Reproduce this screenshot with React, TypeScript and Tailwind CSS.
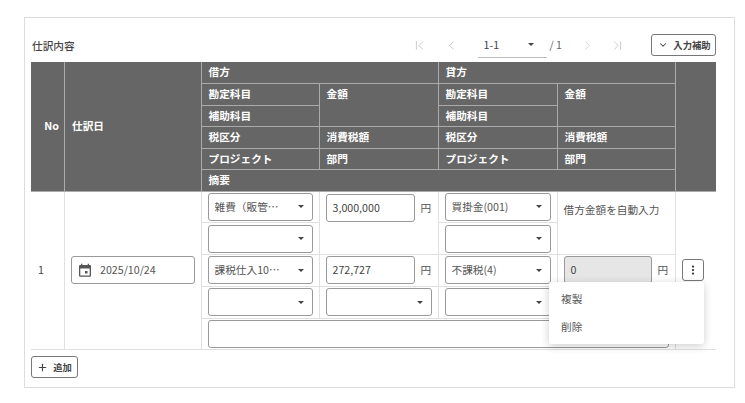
import { ChevronDown, ChevronFirst, ChevronLast, ChevronLeft, ChevronRight, EllipsisVertical, Plus } from 'lucide-react';

const FONT = "font-['Noto_Sans_CJK_JP','Noto_Sans',sans-serif]";

function Caret() {
  return <span className="h-0 w-0 border-x-[3px] border-t-[3px] border-x-transparent border-t-[#444]" />;
}

function Select({ value = '', className = '' }: { value?: string; className?: string }) {
  return (
    <div className={`flex h-[28px] items-center justify-between rounded-[3px] border border-[#999] bg-white pl-[6px] pr-[8px] text-[10.67px] text-[#555] ${className}`}>
      <span className="truncate">{value}</span>
      <Caret />
    </div>
  );
}

function Amount({ value, disabled }: { value: string; disabled?: boolean }) {
  return (
    <div className="flex items-center">
      <div className={`flex h-[28px] flex-1 items-center rounded-[3px] border border-[#999] pl-[6px] text-[10.67px] text-[#444] ${disabled ? 'bg-[#e6e6e6]' : 'bg-white'}`}>
        {value}
      </div>
      <span className="w-[17px] shrink-0 pl-[6px] text-[10.67px] text-[#555]">円</span>
    </div>
  );
}

const th = 'border border-[#aaa] px-[7px] text-left align-top text-[10.67px] font-bold leading-[20px] text-white';
const td = 'border border-[#e0e0e0] px-[6px] py-0 align-middle';

export default function App() {
  return (
    <div className={`h-[403px] w-[745px] overflow-hidden bg-white pl-[24px] pt-[17px] ${FONT}`}>
      <div className="relative h-[371px] w-[711px] border border-[#ddd] px-[6px]">
        {/* Toolbar */}
        <div className="flex h-[44px] w-[685px] items-end justify-between">
          <span className="pb-[8px] pl-[1px] text-[10.67px] font-medium text-[#444]">仕訳内容</span>
          <div className="flex items-center pb-[4px]">
            <ChevronFirst className="h-[15px] w-[15px] text-[#bbb]" strokeWidth={1.25} />
            <ChevronLeft className="ml-[17px] h-[15px] w-[15px] text-[#bbb]" strokeWidth={1.25} />
            <div className="ml-[19px] flex h-[26px] w-[69px] items-center justify-between border-b border-[#bbb] pl-[6px] pr-[13px] text-[10.67px] text-[#444]">
              <span>1-1</span>
              <Caret />
            </div>
            <span className="ml-[3px] text-[10.67px] text-[#666]">/ 1</span>
            <ChevronRight className="ml-[18px] h-[15px] w-[15px] text-[#ccc]" strokeWidth={1.25} />
            <ChevronLast className="ml-[15px] h-[15px] w-[15px] text-[#bbb]" strokeWidth={1.25} />
            <button className="ml-[26px] flex h-[22px] w-[65px] items-center justify-center gap-[5px] rounded-[3px] border border-[#777] bg-white pl-[2px] text-[9.33px] font-bold text-[#444]">
              <ChevronDown className="h-[10px] w-[10px]" strokeWidth={2.5} />
              入力補助
            </button>
          </div>
        </div>

        {/* Journal table */}
        <table className="w-[685px] table-fixed border-collapse">
          <colgroup>
            <col className="w-[33.5px]" />
            <col className="w-[136.5px]" />
            <col className="w-[118px]" />
            <col className="w-[119px]" />
            <col className="w-[119px]" />
            <col className="w-[118px]" />
            <col className="w-[41px]" />
          </colgroup>
          <thead className="bg-[#666]">
            <tr className="h-[21.5px]">
              <th rowSpan={6} className={`${th} !border-l-0 !border-t-0 !pr-[5px] !text-right !align-middle`}>No</th>
              <th rowSpan={6} className={`${th} !border-t-0 !align-middle`}>仕訳日</th>
              <th colSpan={2} className={`${th} !border-t-0`}>借方</th>
              <th colSpan={2} className={`${th} !border-t-0`}>貸方</th>
              <th rowSpan={6} className={`${th} !border-r-0 !border-t-0`} />
            </tr>
            <tr className="h-[21.5px]">
              <th className={th}>勘定科目</th>
              <th rowSpan={2} className={th}>金額</th>
              <th className={th}>勘定科目</th>
              <th rowSpan={2} className={th}>金額</th>
            </tr>
            <tr className="h-[21.5px]">
              <th className={th}>補助科目</th>
              <th className={th}>補助科目</th>
            </tr>
            <tr className="h-[21.5px]">
              <th className={th}>税区分</th>
              <th className={th}>消費税額</th>
              <th className={th}>税区分</th>
              <th className={th}>消費税額</th>
            </tr>
            <tr className="h-[21.5px]">
              <th className={th}>プロジェクト</th>
              <th className={th}>部門</th>
              <th className={th}>プロジェクト</th>
              <th className={th}>部門</th>
            </tr>
            <tr className="h-[21.5px]">
              <th colSpan={4} className={th}>摘要</th>
            </tr>
          </thead>
          <tbody>
            <tr className="h-[31.75px]">
              <td rowSpan={5} className={`${td} !border-l-0 pl-[7px] text-[10.67px] text-[#444]`}>1</td>
              <td rowSpan={5} className={td}>
                <div className="flex h-[28px] items-center gap-[8px] rounded-[3px] border border-[#999] pl-[6px] text-[10.67px] text-[#555]">
                  <svg viewBox="0 0 14 14" className="h-[14px] w-[14px]" fill="#555">
                    <path d="M3 0.8h1.3v1.2h5.4V0.8H11v1.2h.8A1.2 1.2 0 0 1 13 3.2v9.3a1.2 1.2 0 0 1-1.2 1.2H2.2A1.2 1.2 0 0 1 1 12.500V3.200A1.200 1.200 0 0 1 2.200 2H3zM2.300 5.500v6.900h9.400V5.500z" fillRule="evenodd" />
                    <rect x="7" y="8" width="2.500" height="2.500" />
                  </svg>
                  2025/10/24
                </div>
              </td>
              <td className={td}><Select value="雑費（販管…" /></td>
              <td rowSpan={2} className={`${td} !align-top pt-[2px]`}><Amount value="3,000,000" /></td>
              <td className={td}><Select value="買掛金(001)" /></td>
              <td rowSpan={2} className={`${td} !align-top pt-[10px] text-[10.67px] text-[#555]`}>借方金額を自動入力</td>
              <td rowSpan={5} className={`${td} !border-r-0`}>
                <button className="flex h-[22px] w-[22px] items-center justify-center rounded-[3px] border border-[#777] bg-white">
                  <EllipsisVertical className="h-[12px] w-[12px] text-[#333]" strokeWidth={2.5} />
                </button>
              </td>
            </tr>
            <tr className="h-[31.75px]">
              <td className={td}><Select /></td>
              <td className={td}><Select /></td>
            </tr>
            <tr className="h-[31.75px]">
              <td className={td}><Select value="課税仕入10…" /></td>
              <td className={td}><Amount value="272,727" /></td>
              <td className={td}><Select value="不課税(4)" /></td>
              <td className={td}><Amount value="0" disabled /></td>
            </tr>
            <tr className="h-[31.75px]">
              <td className={td}><Select /></td>
              <td className={td}><Select /></td>
              <td className={td}><Select /></td>
              <td className={td}><Select /></td>
            </tr>
            <tr className="h-[31.75px]">
              <td colSpan={4} className={td}>
                <div className="h-[28px] rounded-[3px] border border-[#999] bg-white" />
              </td>
            </tr>
          </tbody>
        </table>

        <button className="mt-[6px] flex h-[22px] w-[47px] items-center justify-center gap-[5px] rounded-[3px] border border-[#777] bg-white text-[9.33px] font-bold text-[#444]">
          <Plus className="h-[11px] w-[11px]" strokeWidth={2.5} />
          追加
        </button>

        {/* Row action menu */}
        <div className="absolute left-[524px] top-[264px] flex h-[62px] w-[155px] flex-col justify-center rounded-[2px] bg-white pl-[12px] text-[10.67px] text-[#555] shadow-[0_2px_8px_rgba(0,0,0,0.2)]">
          <div className="flex h-[28px] items-center">複製</div>
          <div className="flex h-[28px] items-center">削除</div>
        </div>
      </div>
    </div>
  );
}
